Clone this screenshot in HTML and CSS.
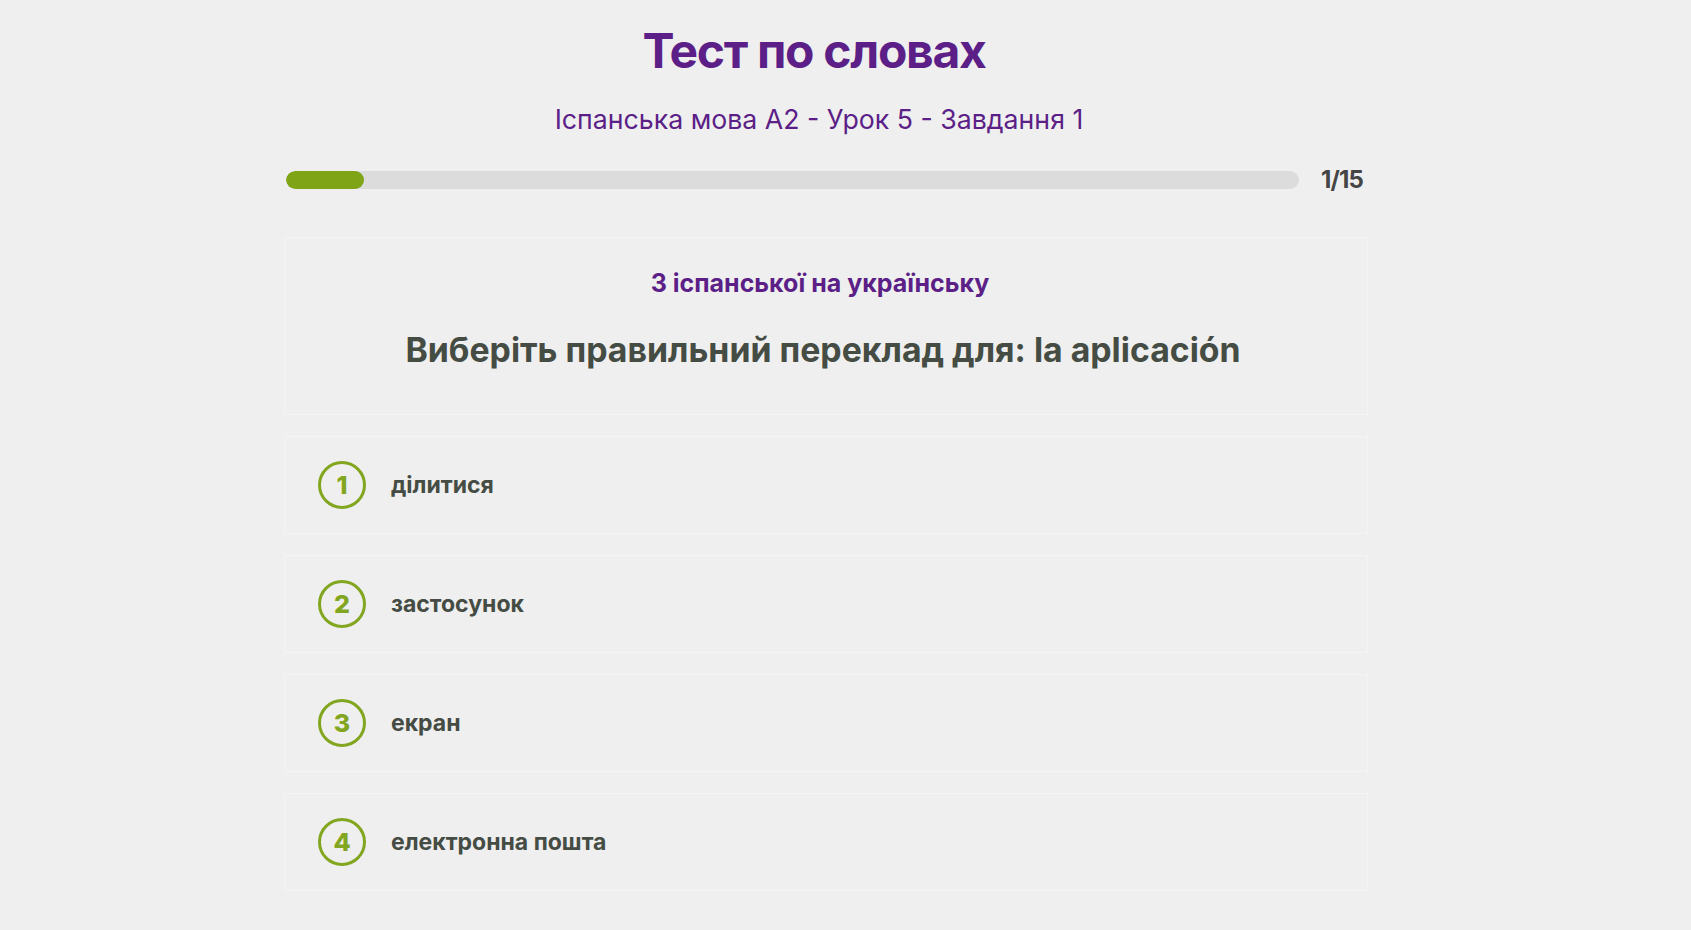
FILE: index.html
```html
<!DOCTYPE html>
<html lang="uk">
<head>
<meta charset="utf-8">
<title>Тест по словах</title>
<link rel="stylesheet" href="styles.css">
</head>
<body>
<main class="page">
  <header class="header">
    <h1 class="title">Тест по словах</h1>
    <p class="subtitle">Іспанська мова А2 - Урок 5 - Завдання 1</p>
  </header>
  <div class="progress">
    <div class="progress-track"><div class="progress-fill" style="width:7.7%"></div></div>
    <span class="progress-count">1/15</span>
  </div>
  <section class="question-card">
    <p class="question-label">З іспанської на українську</p>
    <p class="question-text">Виберіть правильний переклад для: la aplicación</p>
  </section>
  <ul class="options">
    <li class="option"><span class="option-num">1</span><span class="option-text">ділитися</span></li>
    <li class="option"><span class="option-num">2</span><span class="option-text">застосунок</span></li>
    <li class="option"><span class="option-num">3</span><span class="option-text">екран</span></li>
    <li class="option"><span class="option-num">4</span><span class="option-text">електронна пошта</span></li>
  </ul>
</main>
</body>
</html>
```
FILE: styles.css
```css
html, body {
  margin: 0;
  padding: 0;
  background: #efefef;
}
body {
  font-family: "Inter", "Noto Sans", sans-serif;
  color: #454c44;
}
.page {
  width: 1084px;
  margin-left: 284px;
}
.header {
  text-align: center;
  padding-right: 14px;
}
.title {
  margin: 22px 0 0;
  padding-right: 10px;
  font-size: 48px;
  line-height: 58px;
  font-weight: 700;
  color: #5b1f87;
  letter-spacing: -1.3px;
}
.subtitle {
  margin: 23px 0 0;
  font-size: 26.7px;
  line-height: 32px;
  font-weight: 400;
  color: #5b1f87;
}
.progress {
  display: flex;
  align-items: center;
  gap: 22px;
  margin-top: 30px;
  padding-left: 2px;
}
.progress-track {
  width: 1013px;
  height: 18px;
  border-radius: 9px;
  background: #dcdcdc;
  overflow: hidden;
}
.progress-fill {
  height: 100%;
  background: #7fa415;
  border-radius: 9px;
}
.progress-count {
  font-size: 24px;
  font-weight: 700;
  color: #454545;
  letter-spacing: -0.8px;
}
.question-card {
  margin-top: 43px;
  height: 178px;
  box-sizing: border-box;
  border: 1px solid #f4f4f4;
  padding-top: 30px;
  padding-right: 6px;
  text-align: center;
}
.question-label {
  margin: 0;
  padding-right: 6px;
  font-size: 25px;
  line-height: 30px;
  font-weight: 700;
  color: #5b1f87;
}
.question-text {
  margin: 32px 0 0;
  font-size: 33.8px;
  line-height: 40px;
  font-weight: 700;
  color: #454c44;
}
.options {
  list-style: none;
  margin: 21px 0 0;
  padding: 0;
  display: flex;
  flex-direction: column;
  gap: 21px;
}
.option {
  height: 98px;
  box-sizing: border-box;
  border: 1px solid #f4f4f4;
  display: flex;
  align-items: center;
  padding-left: 33px;
  gap: 25px;
}
.option-num {
  width: 48px;
  height: 48px;
  box-sizing: border-box;
  border: 3px solid #82a620;
  border-radius: 50%;
  display: flex;
  align-items: center;
  justify-content: center;
  font-size: 25px;
  font-weight: 800;
  color: #82a620;
}
.option-text {
  font-size: 23px;
  font-weight: 700;
  color: #454c44;
}
```
